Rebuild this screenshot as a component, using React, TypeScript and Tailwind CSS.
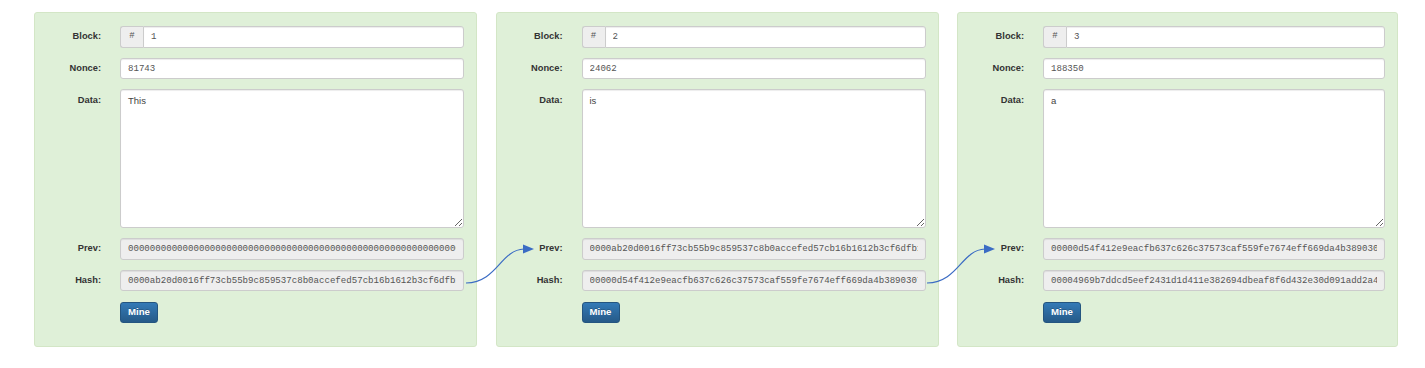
import React from 'react'

type Block = {
  num: number
  nonce: string
  data: string
  prev: string
  hash: string
}

const blocks: Block[] = [
  {
    num: 1,
    nonce: '81743',
    data: 'This',
    prev: '0000000000000000000000000000000000000000000000000000000000000000',
    hash: '0000ab20d0016ff73cb55b9c859537c8b0accefed57cb16b1612b3cf6dfb1a2c',
  },
  {
    num: 2,
    nonce: '24062',
    data: 'is',
    prev: '0000ab20d0016ff73cb55b9c859537c8b0accefed57cb16b1612b3cf6dfb1a2c',
    hash: '00000d54f412e9eacfb637c626c37573caf559fe7674eff669da4b3890307e1d',
  },
  {
    num: 3,
    nonce: '188350',
    data: 'a',
    prev: '00000d54f412e9eacfb637c626c37573caf559fe7674eff669da4b3890307e1d',
    hash: '00004969b7ddcd5eef2431d1d411e382694dbeaf8f6d432e30d091add2a4b6f0',
  },
]

const sans = "font-['Liberation_Sans',Arial,sans-serif]"
const mono = "font-['Liberation_Mono','Courier_New',monospace]"

const inputCls =
  'h-[21.5px] w-full min-w-0 border border-[#ccc] px-[7px] text-[9.1px] text-[#555] outline-none shadow-[inset_0_1px_1px_rgba(0,0,0,0.075)] ' +
  mono

const Label = ({ children, top }: { children: React.ReactNode; top?: boolean }) => (
  <div
    className={`w-[66px] shrink-0 text-right text-[9.3px] font-bold leading-[13px] text-[#333] ${
      top ? 'pt-[5px]' : ''
    }`}
  >
    {children}
  </div>
)

const Arrow = () => (
  <svg
    className="absolute left-[-31px] top-[231px] overflow-visible"
    width="70"
    height="41"
    viewBox="0 0 70 41"
  >
    <path d="M0 39 C 32 38, 34 6, 58 5" fill="none" stroke="#3b6cc4" strokeWidth="1.2" />
    <polygon points="57,0.5 68,5 57,9.5" fill="#3b6cc4" />
  </svg>
)

const Panel = ({ b, first, last }: { b: Block; first: boolean; last: boolean }) => (
  <div
    className={`relative shrink-0 rounded-[3px] border border-[#d3e6c6] bg-[#dff0d8] pt-[13px] pb-[23px] pr-[12px] ${
      last ? 'w-[441px]' : 'w-[443px]'
    }`}
  >
    {!first && <Arrow />}
    <div className="flex flex-col gap-[10px]">
      {/* Block number */}
      <div className="flex items-center gap-[19px]">
        <Label>Block:</Label>
        <div className="flex flex-1">
          <span
            className={`flex h-[21.5px] w-[23px] shrink-0 items-center justify-center rounded-l-[3px] border border-r-0 border-[#ccc] bg-[#eee] text-[9px] text-[#555] ${mono}`}
          >
            #
          </span>
          <input readOnly value={b.num} className={`${inputCls} rounded-r-[3px] bg-white`} />
        </div>
      </div>

      {/* Nonce */}
      <div className="flex items-center gap-[19px]">
        <Label>Nonce:</Label>
        <input readOnly value={b.nonce} className={`${inputCls} rounded-[3px] bg-white`} />
      </div>

      {/* Data */}
      <div className="flex items-start gap-[19px]">
        <Label top>Data:</Label>
        <textarea
          readOnly
          value={b.data}
          className={`h-[139px] w-full rounded-[3px] border border-[#ccc] bg-white px-[7px] py-[4px] text-[9.5px] leading-[13px] text-[#444] outline-none shadow-[inset_0_1px_1px_rgba(0,0,0,0.075)] ${sans}`}
        />
      </div>

      {/* Prev */}
      <div className="flex items-center gap-[19px]">
        <Label>Prev:</Label>
        <input readOnly value={b.prev} className={`${inputCls} rounded-[3px] bg-[#eee]`} />
      </div>

      {/* Hash */}
      <div className="flex items-center gap-[19px]">
        <Label>Hash:</Label>
        <input readOnly value={b.hash} className={`${inputCls} rounded-[3px] bg-[#eee]`} />
      </div>

      <div className="flex gap-[19px]">
        <div className="w-[66px] shrink-0" />
        <button className="mt-[0.5px] h-[21.5px] w-[38px] rounded-[3px] border border-[#245580] bg-gradient-to-b from-[#337ab7] to-[#265a88] text-[9.6px] font-bold text-white [text-shadow:0_-1px_0_rgba(0,0,0,0.2)]">
          Mine
        </button>
      </div>
    </div>
  </div>
)

export default function App() {
  return (
    <div className={`min-h-[368px] bg-white ${sans}`}>
      <div className="flex gap-[18.5px] pl-[34px] pt-[12px]">
        {blocks.map((b, i) => (
          <Panel key={b.num} b={b} first={i === 0} last={i === blocks.length - 1} />
        ))}
      </div>
    </div>
  )
}
